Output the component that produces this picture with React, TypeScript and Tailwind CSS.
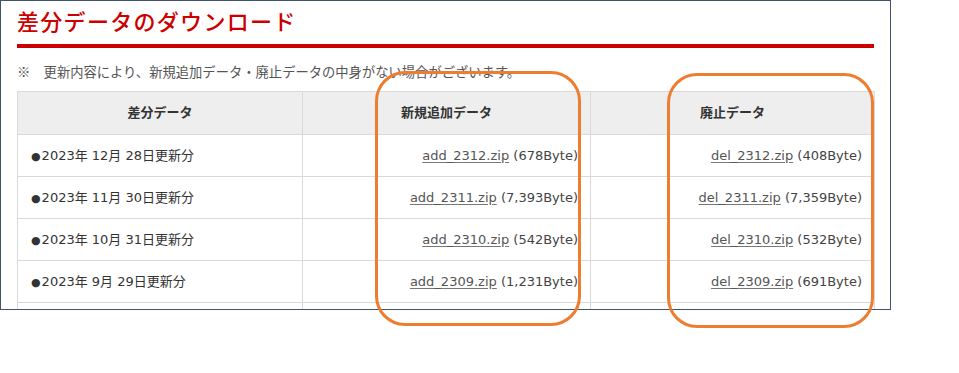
import React from 'react';

const rows = [
  { date: '2023年 12月 28日更新分', add: 'add_2312.zip', addSize: '678Byte', del: 'del_2312.zip', delSize: '408Byte' },
  { date: '2023年 11月 30日更新分', add: 'add_2311.zip', addSize: '7,393Byte', del: 'del_2311.zip', delSize: '7,359Byte' },
  { date: '2023年 10月 31日更新分', add: 'add_2310.zip', addSize: '542Byte', del: 'del_2310.zip', delSize: '532Byte' },
  { date: '2023年 9月 29日更新分', add: 'add_2309.zip', addSize: '1,231Byte', del: 'del_2309.zip', delSize: '691Byte' },
];

const font = { fontFamily: '"DejaVu Sans", "Noto Sans CJK JP", sans-serif' };

function FileCell({ name, size }: { name: string; size: string }) {
  return (
    <td className="border border-[#d9d9d9] pr-[12px] text-right whitespace-nowrap">
      <a href="#" className="text-[#555] underline decoration-[#777] underline-offset-[2px]">{name}</a>
      <span className="text-[#444]"> ({size})</span>
    </td>
  );
}

export default function App() {
  return (
    <div className="relative w-[959px] h-[373px] bg-white" style={font}>
      <div className="w-[891px] h-[310px] border border-[#3f546b] overflow-hidden bg-white pl-[16px] pr-[16px]">
        <h1 className="text-[#cc0000] text-[22px] leading-[30px] tracking-[1.3px] pt-[4px] font-['Noto_Sans_CJK_JP',sans-serif] font-medium">
          差分データのダウンロード
        </h1>
        <div className="mt-[9px] h-[4px] bg-[#cc0000]" />
        <p className="mt-[15px] text-[13.3px] leading-[18px] text-[#555] font-['Noto_Sans_CJK_JP',sans-serif]">
          ※　更新内容により、新規追加データ・廃止データの中身がない場合がございます。
        </p>
        <table className="mt-[10px] w-[857px] border-collapse table-fixed text-[13px] text-[#333]">
          <colgroup>
            <col className="w-[285px]" />
            <col className="w-[288px]" />
            <col className="w-[284px]" />
          </colgroup>
          <thead>
            <tr className="h-[43px] bg-[#eeeeee]">
              <th className="border border-[#d9d9d9] font-bold text-center text-[#333]">差分データ</th>
              <th className="border border-[#d9d9d9] font-bold text-center text-[#333]">新規追加データ</th>
              <th className="border border-[#d9d9d9] font-bold text-center text-[#333]">廃止データ</th>
            </tr>
          </thead>
          <tbody>
            {rows.map(r => (
              <tr key={r.add} className="h-[42px]">
                <td className="border border-[#d9d9d9] pl-[13px] whitespace-nowrap">
                  <span className="text-[11px] mr-[1px]">●</span>{r.date}
                </td>
                <FileCell name={r.add} size={r.addSize} />
                <FileCell name={r.del} size={r.delSize} />
              </tr>
            ))}
            <tr className="h-[42px]">
              <td className="border border-[#d9d9d9]" />
              <td className="border border-[#d9d9d9]" />
              <td className="border border-[#d9d9d9]" />
            </tr>
          </tbody>
        </table>
      </div>
      <div className="absolute left-[375px] top-[71px] w-[206px] h-[255px] rounded-[30px] border-[3px] border-[#ed7d31]" />
      <div className="absolute left-[667px] top-[73px] w-[207px] h-[255px] rounded-[30px] border-[3px] border-[#ed7d31]" />
    </div>
  );
}
